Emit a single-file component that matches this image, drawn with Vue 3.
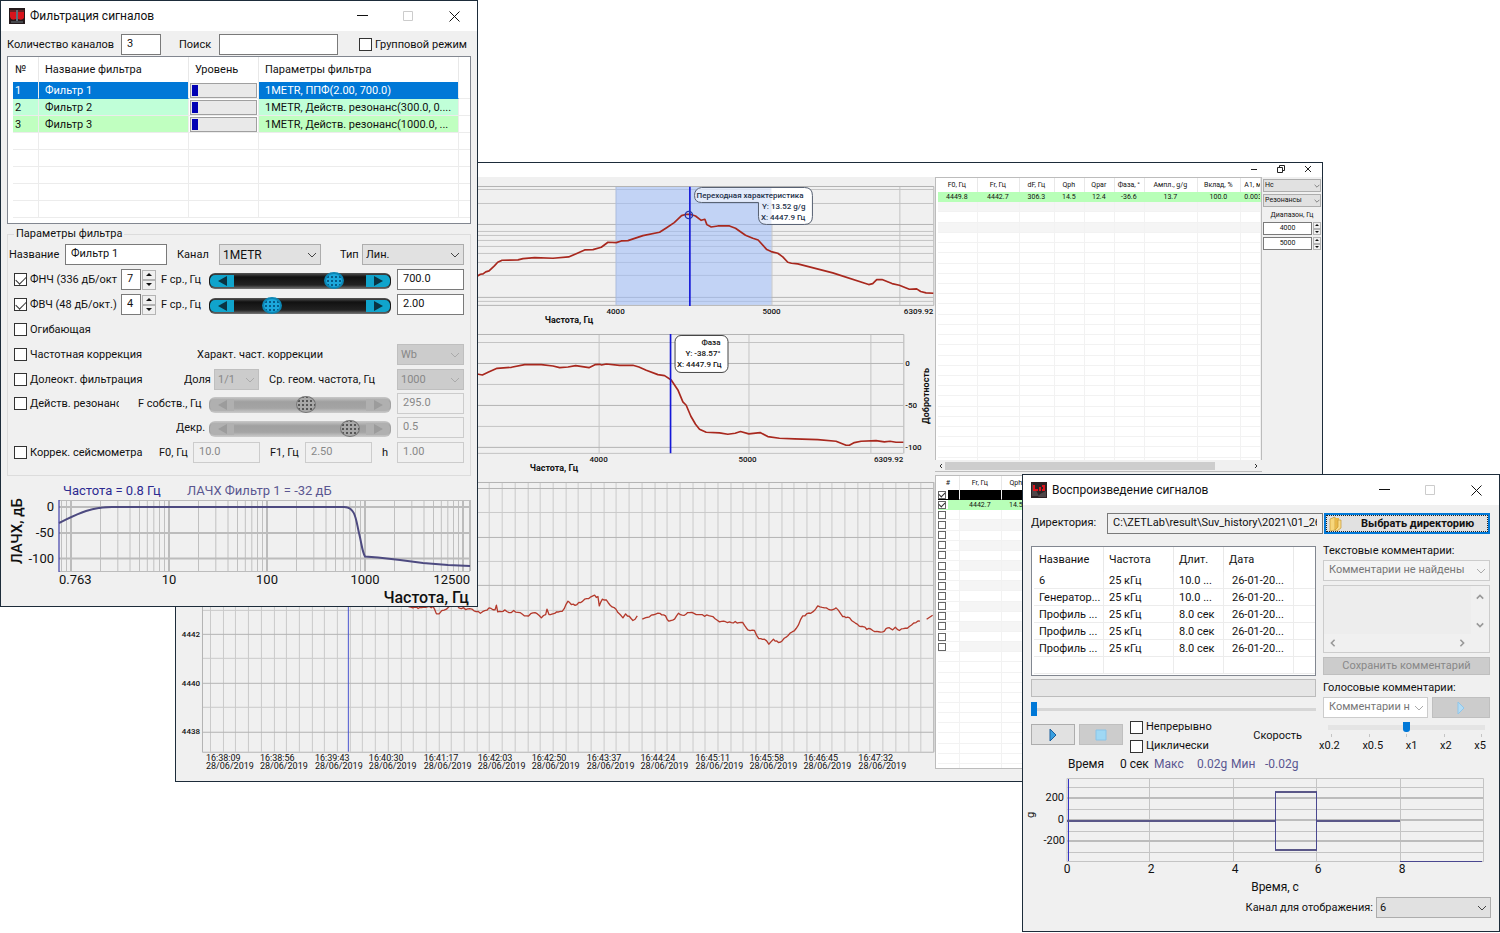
<script setup>
import { ref } from 'vue'

const filters = [
  { n: 1, name: 'Фильтр 1', params: '1METR, ППФ(2.00, 700.0)', cls: 'selected' },
  { n: 2, name: 'Фильтр 2', params: '1METR, Действ. резонанс(300.0, 0....', cls: 'mint' },
  { n: 3, name: 'Фильтр 3', params: '1METR, Действ. резонанс(1000.0, ...', cls: 'lime' }
]
const files = [
  ['6', '25 кГц', '10.0 ...', '26-01-20...'],
  ['Генератор...', '25 кГц', '10.0 ...', '26-01-20...'],
  ['Профиль ...', '25 кГц', '8.0 сек', '26-01-20...'],
  ['Профиль ...', '25 кГц', '8.0 сек', '26-01-20...'],
  ['Профиль ...', '25 кГц', '8.0 сек', '26-01-20...']
]
const resonanceHead = ['F0, Гц', 'Fr, Гц', 'dF, Гц', 'Qph', 'Qpar', 'Фаза, °', 'Ампл., g/g', 'Вклад, %', 'A1, м']
const resonance = ['4449.8', '4442.7', '306.3', '14.5', '12.4', '-36.6', '13.7', '100.0', '0.003']
const times = ['16:38:09', '16:38:56', '16:39:43', '16:40:30', '16:41:17', '16:42:03', '16:42:50', '16:43:37', '16:44:24', '16:45:11', '16:45:58', '16:46:45', '16:47:32']

const fLow = ref(80)
const fHigh = ref(25)
const fOwn = ref(55)
const decr = ref(95)
const position = ref(0)
const speed = ref(2)

// Logarithmic grid of the amplitude response, four decades
const decades = [0, 1, 2, 3, 4].map(d => 71 + d * 98)
const minorLines = []
for (let d = 0; d < 4; d++) {
  for (let k = 2; k < 10; k++) minorLines.push(71 + 98 * (d + Math.log10(k)))
}
minorLines.push(71 + 98 * Math.log10(0.8), 71 + 98 * Math.log10(0.9))

const trendX = Array.from({ length: 58 }, (_, i) => Math.round(210 + i * 12.7))
const trendY = Array.from({ length: 11 }, (_, i) => Math.round(488 + i * 24.35))

// Adds a small repeatable ripple between the key points of a measured curve
function ripple(points, amp) {
  const out = []
  let seed = 7
  for (let i = 0; i < points.length - 1; i++) {
    const [x0, y0] = points[i]
    const [x1, y1] = points[i + 1]
    const steps = Math.max(1, Math.round((x1 - x0) / 6))
    for (let s = 0; s < steps; s++) {
      seed = (seed * 73 + 41) % 997
      const j = s === 0 ? 0 : (seed / 997 - 0.5) * amp
      out.push(`${(x0 + ((x1 - x0) * s) / steps).toFixed(1)},${(y0 + ((y1 - y0) * s) / steps + j).toFixed(1)}`)
    }
  }
  out.push(points[points.length - 1].join(','))
  return out.join(' ')
}
const trendA = ripple([[600, 30], [735, 52], [745, 56], [790, 50], [800, 72], [808, 72], [816, 62], [830, 58], [850, 44], [875, 56], [900, 56], [932, 70], [958, 54], [976, 60], [980, 46], [984, 66], [1005, 60], [1018, 68], [1032, 62], [1070, 78], [1096, 68], [1115, 84], [1128, 74], [1132, 58], [1138, 74], [1178, 64], [1195, 34], [1205, 44], [1222, 44], [1245, 28], [1270, 18], [1285, 20], [1289, 48], [1298, 28], [1310, 30], [1345, 68], [1360, 84], [1368, 72], [1390, 92], [1403, 78]], 7)
const trendB = ripple([[188, 88], [215, 76], [235, 70], [258, 78], [268, 94], [285, 88], [297, 70], [308, 76], [330, 68], [350, 74], [400, 80], [420, 96], [450, 96], [490, 98], [505, 120], [525, 122], [538, 146], [555, 148], [568, 163], [582, 148], [597, 158], [620, 142], [650, 116], [670, 78], [700, 66], [715, 48], [735, 54], [752, 60], [770, 54], [790, 80], [805, 82], [845, 110], [880, 122], [910, 126], [925, 114], [940, 120], [948, 112], [960, 122], [990, 110], [1010, 98], [1022, 94]], 6)
</script>

<template>
  <main class="desktop">
    <section class="window monitor" aria-label="Резонансы">
      <header class="monitor-bar">
        <button aria-label="Свернуть"><svg viewBox="0 0 10 10"><path d="M2 5.500h6" /></svg></button>
        <button aria-label="Восстановить"><svg viewBox="0 0 10 10"><path d="M1.500 3.500h5v5h-5zM3.500 3.500v-2h5v5h-2" /></svg></button>
        <button aria-label="Закрыть"><svg viewBox="0 0 10 10"><path d="M2 2l6 6M8 2l-6 6" /></svg></button>
      </header>
      <div class="monitor-body">
        <div class="charts">
          <svg viewBox="176 177 760 155" class="plot">
            <g stroke="#c4c4c4">
              <path d="M203 189.500H934M203 203.500H934M203 231.500H934M203 235.500H934M203 240.500H934M203 246.500H934M203 253.500H934M203 262.500H934M203 275.500H934M203 301.500H934M900.500 186V305M616.500 186V305M772.500 186V305" />
              <path d="M203 224.500H934M203 297.500H934" stroke="#b4b4b4" />
              <path d="M203 186.500H934.500V305.500H203z" fill="none" stroke="#b4b4b4" />
            </g>
            <rect x="616" y="187" width="156" height="118" fill="#9cbcfa" fill-opacity=".55" />
            <path d="M702 187.500h103q8 0 8 8v21q0 8-8 8h-38q-8 0-8-8v-14h-57q-7 0-7-7t7-8z" fill="#fff" fill-opacity=".55" />
            <path d="M772 188h33q8 0 8 8v20q0 8-8 8H772z" fill="#fff" />
            <path d="M702 187.500h103q8 0 8 8v21q0 8-8 8h-38q-8 0-8-8v-14h-57q-7 0-7-7t7-8z" fill="none" stroke="#555f70" />
            <g transform="translate(470 155) scale(.33333)">
              <path d="M22 364L32 358 40 357 48 351 58 348 74 333 84 322 97 316 145 315 160 311 195 308 250 310 297 306 318 297 345 285 370 284 395 277 415 262 440 263 455 258 475 257 520 242 570 232 590 219 614 203 636 182 650 178 662 178 678 183 695 196 706 193 712 209 725 216 745 213 780 213 798 220 828 241 850 250 866 255 892 284 905 290 925 295 940 306 955 322 966 325 985 327 1090 354 1198 389 1210 386 1222 374 1238 374 1268 386 1290 391 1320 403 1342 402 1354 410 1370 414 1392 415" class="curve" />
              <path d="M661 95V453" class="cursor" />
              <circle cx="658" cy="180" r="11" fill="none" stroke="#2438a8" stroke-width="4" />
            </g>
            <g class="tiny" fill="#22304a">
              <text x="697" y="198">Переходная характеристика</text>
              <text x="806" y="209" text-anchor="end">Y: 13.52 g/g</text>
              <text x="806" y="220" text-anchor="end">X: 4447.9 Гц</text>
            </g>
            <g class="tiny">
              <text x="616" y="314" text-anchor="middle">4000</text>
              <text x="772" y="314" text-anchor="middle">5000</text>
              <text x="934" y="314" text-anchor="end">6309.92</text>
              <text x="545" y="323" class="axis">Частота, Гц</text>
            </g>
          </svg>
          <svg viewBox="176 332 760 148" class="plot">
            <path d="M203 342.500H904M203 384.500H904M203 426.500H904M203 453.500H904M599.500 334V453M749.500 334V453M871.500 334V453" stroke="#c4c4c4" />
            <path d="M203 334.500H904.500V453.500M203 363.500H904M203 405.500H904M203 447.500H904" fill="none" stroke="#b4b4b4" />
            <g transform="translate(470 325) scale(.33333)">
              <path d="M22 147L38 150 55 142 82 130 125 127 165 119 215 119 250 123 270 128 295 126 318 122 358 128 376 119 390 118 396 120 410 117 450 121 490 121 508 126 530 136 565 149 585 152 605 165 625 195 640 231 650 241 664 274 678 298 690 313 710 322 750 324 775 328 797 325 813 320 838 327 872 323 895 335 930 340 975 342 1045 344 1100 349 1130 361 1140 361 1155 353 1175 349 1220 347 1245 351 1262 349 1280 352 1302 352" class="curve" />
              <path d="M603 27V385" class="cursor" />
            </g>
            <rect x="675.500" y="335.500" width="53" height="37" rx="6" fill="#fff" stroke="#444" />
            <g class="tiny">
              <text x="721" y="345" text-anchor="end">Фаза</text>
              <text x="721" y="356" text-anchor="end">Y: -38.57°</text>
              <text x="722" y="367" text-anchor="end">X: 4447.9 Гц</text>
              <text x="906" y="366">0</text>
              <text x="906" y="408">-50</text>
              <text x="906" y="450">-100</text>
              <text x="599" y="462" text-anchor="middle">4000</text>
              <text x="748" y="462" text-anchor="middle">5000</text>
              <text x="904" y="462" text-anchor="end">6309.92</text>
              <text x="530" y="471" class="axis">Частота, Гц</text>
              <text transform="translate(930 424) rotate(-90)" class="axis">Добротность</text>
            </g>
          </svg>
          <svg viewBox="176 480 760 302" class="plot">
            <path v-for="x in trendX" :key="'x' + x" :d="`M${x}.5 482V752`" stroke="#cacaca" />
            <path v-for="(y, i) in trendY" :key="'y' + y" :d="`M202 ${y}.5H934`" :stroke="i % 2 ? '#cacaca' : '#b4b4b4'" />
            <path d="M202.500 482.500H934.500V752.500H202.500z" fill="none" stroke="#b4b4b4" />
            <path d="M348.500 482V752" stroke="#4a54d0" />
            <g transform="translate(170 590) scale(.33333)"><polyline :points="trendA" class="curve thin" /></g>
            <g transform="translate(580 590) scale(.33333)">
              <polyline :points="trendB" class="curve thin" />
              <path d="M1042 88L1060 76" class="curve thin" />
            </g>
            <g class="tiny">
              <text x="200" y="637" text-anchor="end">4442</text>
              <text x="200" y="686" text-anchor="end">4440</text>
              <text x="200" y="734" text-anchor="end">4438</text>
            </g>
            <g class="stamps">
              <template v-for="(t, i) in times" :key="t">
                <text :x="206 + Math.round(i * 54.4)" y="761">{{ t }}</text>
                <text :x="206 + Math.round(i * 54.4)" y="769">28/06/2019</text>
              </template>
            </g>
          </svg>
        </div>

        <div class="tables">
          <div class="pane top-pane">
            <table class="mini">
              <colgroup><col class="m40" /><col class="m41" /><col class="m35" /><col class="m30" /><col class="m30" /><col class="m30" /><col class="m53" /><col class="m43" /><col /></colgroup>
              <thead><tr><th v-for="h in resonanceHead" :key="h">{{ h }}</th></tr></thead>
              <tbody>
                <tr class="green"><td v-for="(v, i) in resonance" :key="i">{{ v }}</td></tr>
                <tr v-for="r in 26" :key="r" :class="{ shade: r === 1 || r === 3 }"><td v-for="c in 9" :key="c"></td></tr>
              </tbody>
            </table>
          </div>
          <div class="hscroll"><svg viewBox="0 0 6 6"><path d="M4 1L2 3l2 2" /></svg><span class="thumb"></span><svg viewBox="0 0 6 6"><path d="M2 1l2 2-2 2" /></svg></div>
          <div class="pane low-pane">
            <table class="mini">
              <colgroup><col class="m22" /><col class="m41" /><col class="m30" /><col class="m41" /><col /></colgroup>
              <thead><tr><th>#</th><th>Fr, Гц</th><th>Qph</th><th></th><th></th></tr></thead>
              <tbody>
                <tr v-for="r in 28" :key="r" :class="{ black: r === 1, green: r === 2, shade: r % 2 === 0 && r < 17 && r > 2 }">
                  <td class="tick"><input v-if="r < 17" type="checkbox" :checked="r < 3" :aria-label="'Строка ' + r" /></td>
                  <td>{{ r === 2 ? '4442.7' : '' }}</td>
                  <td>{{ r === 2 ? '14.5' : '' }}</td>
                  <td></td><td></td>
                </tr>
              </tbody>
            </table>
          </div>
        </div>

        <aside class="range-panel">
          <span class="pick"><select aria-label="Величина"><option>Hc</option></select><svg class="chev" viewBox="0 0 10 6"><path d="M1 1l4 4 4-4" /></svg></span>
          <span class="pick"><select aria-label="Режим"><option>Резонансы</option></select><svg class="chev" viewBox="0 0 10 6"><path d="M1 1l4 4 4-4" /></svg></span>
          <label class="range-title" for="range-from">Диапазон, Гц</label>
          <div class="range-row"><input id="range-from" value="4000" /><span class="spin"><button aria-label="Больше"><i class="up"></i></button><button aria-label="Меньше"><i class="down"></i></button></span></div>
          <div class="range-row"><input aria-label="Верхняя граница" value="5000" /><span class="spin"><button aria-label="Больше"><i class="up"></i></button><button aria-label="Меньше"><i class="down"></i></button></span></div>
        </aside>
      </div>
    </section>

    <section class="window filter" aria-label="Фильтрация сигналов">
      <header class="bar">
        <svg class="logo" viewBox="0 0 16 16"><rect width="16" height="16" fill="#241a1c" /><path d="M1 2h6v9q-5 2-6-2zM9 2h6v8q-2 3-6 1z" fill="#d8141c" /><path d="M1 2h14v2H1z" fill="#6b2024" /><path d="M7 2h2v12H7z" fill="#5d6d78" /><path d="M2 13h12v2H2z" fill="#46484c" /></svg>
        <h1>Фильтрация сигналов</h1>
        <button aria-label="Свернуть"><svg viewBox="0 0 11 11"><path d="M0 4.500h11" /></svg></button>
        <button aria-label="Развернуть" disabled><svg viewBox="0 0 11 11"><path d="M.5.5h9v9h-9z" /></svg></button>
        <button aria-label="Закрыть"><svg viewBox="0 0 11 11"><path d="M.5.5l10 10M10.500.5l-10 10" /></svg></button>
      </header>
      <div class="filter-body">
        <div class="row search-row">
          <label for="count">Количество каналов</label><input id="count" value="3" />
          <label for="search" class="pad-search">Поиск</label><input id="search" />
          <label class="check"><input type="checkbox" />Групповой режим</label>
        </div>
        <div class="list-box">
          <table class="list filter-list">
            <colgroup><col class="c26" /><col class="c150" /><col class="c70" /><col class="c200" /><col /></colgroup>
            <thead><tr><th>№</th><th>Название фильтра</th><th>Уровень</th><th>Параметры фильтра</th><th></th></tr></thead>
            <tbody>
              <tr v-for="f in filters" :key="f.n" :class="f.cls">
                <td>{{ f.n }}</td><td>{{ f.name }}</td><td class="level"><div><i></i></div></td><td>{{ f.params }}</td><td></td>
              </tr>
              <tr v-for="r in 5" :key="'e' + r"><td v-for="c in 5" :key="c"></td></tr>
            </tbody>
          </table>
        </div>
        <fieldset>
          <legend>Параметры фильтра</legend>
          <div class="row r-name">
            <label for="fname">Название</label><input id="fname" value="Фильтр 1" />
            <label for="chan" class="pad-m">Канал</label>
            <span class="pick big"><select id="chan"><option>1METR</option></select><svg class="chev" viewBox="0 0 10 6"><path d="M1 1l4 4 4-4" /></svg></span>
            <label for="type" class="pad-l">Тип</label>
            <span class="pick"><select id="type"><option>Лин.</option></select><svg class="chev" viewBox="0 0 10 6"><path d="M1 1l4 4 4-4" /></svg></span>
          </div>
          <div class="row r-slide">
            <label class="check"><input type="checkbox" checked />ФНЧ (336 дБ/окт</label>
            <input class="order" value="7" aria-label="Порядок ФНЧ" />
            <span class="spin"><button aria-label="Больше"><i class="up"></i></button><button aria-label="Меньше"><i class="down"></i></button></span>
            <label for="s1" class="pad-s">F ср., Гц</label>
            <span class="slider"><button aria-label="Влево"><i class="left"></i></button><input id="s1" v-model="fLow" type="range" /><button aria-label="Вправо"><i class="right"></i></button></span>
            <input value="700.0" aria-label="Частота ФНЧ" />
          </div>
          <div class="row r-slide">
            <label class="check"><input type="checkbox" checked />ФВЧ (48 дБ/окт.)</label>
            <input class="order" value="4" aria-label="Порядок ФВЧ" />
            <span class="spin"><button aria-label="Больше"><i class="up"></i></button><button aria-label="Меньше"><i class="down"></i></button></span>
            <label for="s2" class="pad-s">F ср., Гц</label>
            <span class="slider"><button aria-label="Влево"><i class="left"></i></button><input id="s2" v-model="fHigh" type="range" /><button aria-label="Вправо"><i class="right"></i></button></span>
            <input value="2.00" aria-label="Частота ФВЧ" />
          </div>
          <div class="row"><label class="check"><input type="checkbox" />Огибающая</label></div>
          <div class="row r-corr">
            <label class="check"><input type="checkbox" />Частотная коррекция</label>
            <label for="corr">Характ. част. коррекции</label>
            <span class="pick off"><select id="corr" disabled><option>Wb</option></select><svg class="chev" viewBox="0 0 10 6"><path d="M1 1l4 4 4-4" /></svg></span>
          </div>
          <div class="row r-oct">
            <label class="check"><input type="checkbox" />Долеокт. фильтрация</label>
            <label for="share">Доля</label>
            <span class="pick off"><select id="share" disabled><option>1/1</option></select><svg class="chev" viewBox="0 0 10 6"><path d="M1 1l4 4 4-4" /></svg></span>
            <label for="mid" class="pad-m">Ср. геом. частота, Гц</label>
            <span class="pick off"><select id="mid" disabled><option>1000</option></select><svg class="chev" viewBox="0 0 10 6"><path d="M1 1l4 4 4-4" /></svg></span>
          </div>
          <div class="row r-res">
            <label class="check"><input type="checkbox" />Действ. резонанс</label>
            <label for="s3" class="pad-l">F собств., Гц</label>
            <span class="slider off"><button disabled aria-label="Влево"><i class="left"></i></button><input id="s3" v-model="fOwn" type="range" disabled /><button disabled aria-label="Вправо"><i class="right"></i></button></span>
            <input value="295.0" disabled aria-label="Собственная частота" />
          </div>
          <div class="row r-decr">
            <label for="s4">Декр.</label>
            <span class="slider off"><button disabled aria-label="Влево"><i class="left"></i></button><input id="s4" v-model="decr" type="range" disabled /><button disabled aria-label="Вправо"><i class="right"></i></button></span>
            <input value="0.5" disabled aria-label="Декремент" />
          </div>
          <div class="row r-seis">
            <label class="check"><input type="checkbox" />Коррек. сейсмометра</label>
            <label for="f0">F0, Гц</label><input id="f0" value="10.0" disabled />
            <label for="f1" class="pad-m">F1, Гц</label><input id="f1" value="2.50" disabled />
            <label for="hh" class="pad-m">h</label><input id="hh" value="1.00" disabled />
          </div>
        </fieldset>
      </div>
      <svg viewBox="1 480 476 126" class="plot">
        <path v-for="x in minorLines" :key="x" :d="`M${x.toFixed(1)} 500V571`" stroke="#c0c0c0" />
        <path v-for="x in decades" :key="x" :d="`M${x} 500V571`" stroke="#bcbcbc" stroke-width="2" />
        <path d="M59 500.500H470M59 571.500H470" stroke="#bcbcbc" />
        <path d="M59 507H470M59 533H470M59 558.500H470M470 500V571" stroke="#bcbcbc" stroke-width="2" />
        <path d="M59 500V572" stroke="#1c1c9c" />
        <path d="M59 523C74 516 88 507 112 507H344C356 507 356 521 359 533S362 551 365 556.500L378 557.500 400 560 423 563 448 565 470 566" fill="none" stroke="#4d4a80" stroke-width="2" />
        <g fill="#2c2a90" class="f13"><text x="63" y="495">Частота = 0.8 Гц</text><text x="187" y="495" fill="#5a5790">ЛАЧХ Фильтр 1 = -32 дБ</text></g>
        <g class="f13">
          <text x="54" y="511" text-anchor="end">0</text><text x="54" y="537" text-anchor="end">-50</text><text x="54" y="563" text-anchor="end">-100</text>
          <text x="59" y="584">0.763</text><text x="169" y="584" text-anchor="middle">10</text><text x="267" y="584" text-anchor="middle">100</text><text x="365" y="584" text-anchor="middle">1000</text><text x="470" y="584" text-anchor="end">12500</text>
          <text x="469" y="603" text-anchor="end" class="f16 med">Частота, Гц</text>
          <text transform="translate(22 564) rotate(-90)" class="f15 med">ЛАЧХ, дБ</text>
        </g>
      </svg>
    </section>

    <section class="window player" aria-label="Воспроизведение сигналов">
      <header class="bar">
        <svg class="logo" viewBox="0 0 16 16"><rect width="16" height="16" fill="#2c2224" /><path d="M1 1l7 13H1zM9 12l6-3v6H7z" fill="#6c6264" opacity=".55" /><path d="M2 3h2v4h3v2H2zM8 5h2v4H8zM11 3h3v6h-3V7h1V5h-1z" fill="#e0141c" /></svg>
        <h1>Воспроизведение сигналов</h1>
        <button aria-label="Свернуть"><svg viewBox="0 0 11 11"><path d="M0 4.500h11" /></svg></button>
        <button aria-label="Развернуть" disabled><svg viewBox="0 0 11 11"><path d="M.5.5h9v9h-9z" /></svg></button>
        <button aria-label="Закрыть"><svg viewBox="0 0 11 11"><path d="M.5.5l10 10M10.500.5l-10 10" /></svg></button>
      </header>
      <div class="dir-row">
        <label for="dir">Директория:</label>
        <input id="dir" value="C:\ZETLab\result\Suv_history\2021\01_26" readonly />
        <button class="choose">
          <svg viewBox="0 0 16 16"><path d="M2 3l5-2v13l-5 1z" fill="#f7d77c" stroke="#c79a35" stroke-width=".7" /><path d="M7 2h4v12H7z" fill="#e8b84a" /><path d="M10 4h3v8l-4 3-2-1 3-3z" fill="#f8dc8c" stroke="#c79a35" stroke-width=".7" /></svg>
          <span>Выбрать директорию</span>
        </button>
      </div>
      <div class="player-grid">
        <div class="left-col">
          <div class="list-box files">
            <table class="list file-list">
              <colgroup><col class="c70" /><col class="c70" /><col class="c50" /><col class="c70" /><col /></colgroup>
              <thead><tr><th>Название</th><th>Частота</th><th>Длит.</th><th>Дата</th><th></th></tr></thead>
              <tbody>
                <tr v-for="(f, i) in files" :key="i"><td v-for="(c, k) in f" :key="k">{{ c }}</td><td></td></tr>
                <tr><td v-for="c in 5" :key="c"></td></tr>
              </tbody>
            </table>
          </div>
          <div class="progress" role="progressbar" aria-label="Ход воспроизведения"></div>
          <input v-model="position" class="seek" type="range" aria-label="Позиция" />
          <div class="play-row">
            <button class="media" aria-label="Воспроизвести"><svg viewBox="0 0 16 16"><path d="M5 2l6 6-6 6z" fill="#3aa0e0" stroke="#1a5f9c" /></svg></button>
            <button class="media off" disabled aria-label="Стоп"><svg viewBox="0 0 16 16"><path d="M3 3h10v10H3z" fill="#9fd8f4" stroke="#8ac4e8" /></svg></button>
            <div class="modes">
              <label class="check"><input type="checkbox" />Непрерывно</label>
              <label class="check"><input type="checkbox" />Циклически</label>
            </div>
            <label for="speed" class="speed-label">Скорость</label>
          </div>
        </div>
        <div class="right-col">
          <label for="txt">Текстовые комментарии:</label>
          <span class="pick ghost"><select id="txt" disabled><option>Комментарии не найдены</option></select><svg class="chev" viewBox="0 0 10 6"><path d="M1 1l4 4 4-4" /></svg></span>
          <div class="memo">
            <textarea disabled aria-label="Комментарий"></textarea>
            <span class="vbar"><svg viewBox="0 0 10 6"><path d="M1 5l4-4 4 4" /></svg><svg viewBox="0 0 10 6"><path d="M1 1l4 4 4-4" /></svg></span>
            <span class="hbar"><svg viewBox="0 0 6 10"><path d="M5 1L1 5l4 4" /></svg><svg viewBox="0 0 6 10"><path d="M1 1l4 4-4 4" /></svg></span>
          </div>
          <button class="save" disabled>Сохранить комментарий</button>
          <label for="voice">Голосовые комментарии:</label>
          <div class="voice-row">
            <span class="pick ghost"><select id="voice" disabled><option>Комментарии н</option></select><svg class="chev" viewBox="0 0 10 6"><path d="M1 1l4 4 4-4" /></svg></span>
            <button class="media off" disabled aria-label="Прослушать"><svg viewBox="0 0 16 16"><path d="M5 2l6 6-6 6z" fill="#b4dcf4" stroke="#8fc6ea" /></svg></button>
          </div>
          <input id="speed" v-model="speed" class="speed" type="range" min="0" max="4" />
          <div class="ticks"><i v-for="n in 5" :key="n"></i></div>
          <div class="marks"><span>x0.2</span><span>x0.5</span><span>x1</span><span>x2</span><span>x5</span></div>
        </div>
      </div>
      <svg viewBox="1023 755 476 141" class="plot">
        <path d="M1067 779.500H1483.500V862.500H1067zM1067 788.500h416M1067 810.500h416M1067 832.500h416M1067 853.500h416M1149.500 779v83M1233.500 779v83M1316.500 779v83M1400.500 779v83" fill="none" stroke="#c4c4c4" />
        <path d="M1067 799h416M1067 821h416M1067 842h416" stroke="#bcbcbc" stroke-width="2" />
        <path d="M1068.500 780v82" stroke="#3434c4" />
        <path d="M1067 822H1275M1275 793H1317M1275 851H1317M1316 822H1400" stroke="#5a5788" stroke-width="2" />
        <path d="M1275.500 793V851M1316.500 793V851M1400 862.500H1482" stroke="#4a4890" />
        <g class="f12">
          <text x="1068" y="769">Время</text><text x="1120" y="769">0 сек</text>
          <g fill="#5a5790"><text x="1154" y="769">Макс</text><text x="1197" y="769">0.02g</text><text x="1231" y="769">Мин</text><text x="1265" y="769">-0.02g</text></g>
          <text x="1275" y="892" text-anchor="middle">Время, с</text>
        </g>
        <g class="f11">
          <text x="1064" y="802" text-anchor="end">200</text><text x="1064" y="824" text-anchor="end">0</text><text x="1065" y="845" text-anchor="end">-200</text>
          <text transform="translate(1034 819) rotate(-90)">g</text>
        </g>
        <g class="f12" text-anchor="middle"><text x="1067" y="874">0</text><text x="1151" y="874">2</text><text x="1235" y="874">4</text><text x="1318" y="874">6</text><text x="1402" y="874">8</text></g>
      </svg>
      <div class="show-row">
        <label for="show">Канал для отображения:</label>
        <span class="pick"><select id="show"><option>6</option></select><svg class="chev" viewBox="0 0 10 6"><path d="M1 1l4 4 4-4" /></svg></span>
      </div>
    </section>
  </main>
</template>

<style>
body { background: #fff; }
</style>

<style scoped>
* { box-sizing: border-box; }
.desktop {
  display: grid;
  grid-template-columns: minmax(0, 175fr) minmax(0, 303fr) minmax(0, 544fr) minmax(0, 301fr) minmax(0, 177fr);
  align-items: start;
  min-height: 100vh;
  overflow: hidden;
  font-family: Roboto, "Liberation Sans", sans-serif;
  font-size: 11px;
  line-height: 14px;
  color: #111;
}
.window { grid-row: 1; min-width: 0; background: #f0f0f0; border: 1px solid #1d2c3a; display: flex; flex-direction: column; }
.monitor { grid-column: 2 / 5; margin-top: 162px; }
.filter { grid-column: 1 / 3; z-index: 1; }
.player { grid-column: 4 / 6; margin-top: 474px; z-index: 2; }

input, select, button, textarea { font: inherit; color: inherit; margin: 0; min-width: 0; }
button { padding: 0; border: 0; background: none; }
input { width: 100%; height: 21px; border: 1px solid #7a7a7a; background: #fff; padding: 0 5px 2px; border-radius: 0; }
input:disabled { background: #f0f0f0; border-color: #ccc; color: #888; }
input[type="checkbox"] { appearance: none; flex: none; width: 13px; height: 13px; padding: 0; border: 1px solid #333; background: #fff; display: grid; place-items: center; }
input[type="checkbox"]:checked::before { content: ""; width: 9px; height: 5px; margin-top: -2px; border: solid #333; border-width: 0 0 1px 1px; transform: rotate(-45deg); }
label { white-space: nowrap; overflow: hidden; }
.plot { display: block; width: 100%; height: auto; }

.bar { display: flex; align-items: center; height: 30px; background: #fff; padding-left: 8px; }
.bar h1 { flex: 1; margin: 0 0 0 5px; font-size: 12px; font-weight: 400; line-height: 16px; }
.bar button { width: 46px; height: 30px; display: grid; place-items: center; }
.bar button svg { width: 11px; height: 11px; fill: none; stroke: #111; }
.bar button:disabled svg { stroke: #ccc; }
.logo { width: 16px; height: 16px; }

.pick { display: grid; align-items: center; min-width: 0; }
.pick select { grid-area: 1 / 1; width: 100%; height: 21px; appearance: none; border: 1px solid #adadad; border-radius: 0; background: #e1e1e1; padding: 0 3px; opacity: 1; }
.pick .chev { grid-area: 1 / 1; justify-self: end; width: 10px; height: 6px; margin-right: 4px; fill: none; stroke: #444; pointer-events: none; }
.pick.big select { font-size: 12px; }
.pick.off select { background: #ccc; border-color: #bfbfbf; color: #888; }
.pick.off .chev, .pick.ghost .chev { stroke: #aaa; }
.pick.ghost select { background: #f4f4f4; border-color: #ccc; color: #777; padding: 0 5px 2px; }

.spin { display: grid; grid-template-rows: 1fr 1fr; height: 20px; margin-left: 1px; }
.spin button { border: 1px solid #b4b4b4; display: grid; place-items: center; }
.spin i { border: solid transparent; border-width: 0 3px; }
.spin .up { border-bottom: 3px solid #111; }
.spin .down { border-top: 3px solid #111; }

.row { display: grid; align-items: center; height: 21px; }
.check { display: flex; align-items: center; gap: 3px; padding-left: 5px; }
.filter-body { padding: 3px 6px 4px; display: flex; flex-direction: column; }
.search-row { grid-template-columns: 114px 40px 58px 119px 1fr; margin-bottom: 1px; }
.search-row .check { padding-left: 21px; }
.pad-search { padding-left: 18px; }
.list-box { border: 1px solid #828790; background: #fff; overflow: hidden; padding-left: 5px; }
.list { width: 100%; table-layout: fixed; border-spacing: 0; }
.list th { height: 25px; font-weight: 400; text-align: left; padding: 0 0 0 6px; border-right: 1px solid #e8e8e8; white-space: nowrap; }
.list td { height: 17px; line-height: 14px; padding: 2px 0 0 6px; border-right: 1px solid #ececec; border-bottom: 1px solid #ececec; white-space: nowrap; overflow: hidden; }
.list th:last-child, .list td:last-child { border-right: 0; }
.filter-list th:first-child, .filter-list td:first-child { padding-left: 2px; }
.c26 { width: 26px; } .c50 { width: 50px; } .c70 { width: 70px; } .c150 { width: 150px; } .c200 { width: 200px; }
.filter .list-box { height: 168px; }
.selected td:not(:last-child) { background: #0078d7; color: #fff; border-bottom-color: #0078d7; }
.mint td:not(:last-child) { background: #c0ffd8; }
.lime td:not(:last-child) { background: #c0ffc0; }
.list tr td.level { background: #fff; padding: 0 1px; border-bottom-color: #ececec; }
.level div { height: 15px; border: 1px solid #a0a0a0; background: #e9e9e9; padding: 1px; }
.level i { display: block; width: 6px; height: 11px; background: #0000b4; }

fieldset { margin: 3px 0 0; padding: 3px 6px 12px 1px; border: 1px solid #dcdcdc; display: grid; row-gap: 4px; min-width: 0; }
legend { margin-left: 5px; padding: 0 2px; height: 14px; }
.r-name { grid-template-columns: 56px 102px 52px 102px 41px 1fr; }
.r-slide { grid-template-columns: 112px 20px 15px 53px 1fr 73px; }
.r-corr { grid-template-columns: 188px 1fr 67px; }
.r-oct { grid-template-columns: 175px 30px 45px 1fr 67px; height: 20px; }
.r-res { grid-template-columns: 110px 90px 1fr 73px; height: 20px; }
.r-decr { grid-template-columns: 33px 182px 73px; justify-content: end; }
.r-seis { grid-template-columns: 150px 34px 67px 45px 1fr 25px 67px; }
.r-slide > input:last-child, .r-res > input, .r-decr > input { width: 67px; justify-self: end; }
.pad-m { padding-left: 10px; } .pad-l { padding-left: 19px; } .pad-s { padding-left: 5px; }

.slider { display: flex; align-items: center; height: 16px; border-radius: 6px; background: linear-gradient(#555, #111 25%, #222 75%, #777); padding: 0 1px; margin-top: 2px; }
.slider button { width: 24px; height: 12px; border-radius: 5px 0 0 5px; background: #10a4cc; display: grid; place-items: center; }
.slider button:last-child { border-radius: 0 5px 5px 0; }
.slider i { border: solid transparent; border-width: 5px 0; }
.slider .left { border-right: 9px solid #0b3442; }
.slider .right { border-left: 9px solid #0b3442; }
.slider input { appearance: none; flex: 1; height: 17px; border: 0; padding: 0; background: none; }
.slider input::-webkit-slider-thumb { appearance: none; width: 20px; height: 17px; border-radius: 50%; border: 2px solid #0b86b4; background: radial-gradient(circle, #075c88 25%, transparent 40%) 0 1px / 4px 4px, #1ca8dc; }
.slider.off { background: linear-gradient(#c8c8c8, #a0a0a0 30%, #a4a4a4 70%, #ccc); }
.slider.off button { background: #b0b0b0; }
.slider.off .left { border-right-color: #9c9c9c; }
.slider.off .right { border-left-color: #9c9c9c; }
.slider.off input::-webkit-slider-thumb { border: 1px solid #777; background: radial-gradient(circle, #555 25%, transparent 40%) 0 2px / 4px 4px, #a8a8a8; }

.plot text { fill: #111; }
.plot g[fill] > text:not([fill]) { fill: inherit; }
.plot text[fill] { fill: #5a5790; }
.tiny text { font-size: 8px; font-weight: 500; }
.stamps text { font-size: 9px; }
.plot .axis { font-size: 9px; font-weight: 700; }
.f11 { font-size: 11px; } .f12 { font-size: 12px; } .f13 { font-size: 13px; }
.f15 { font-size: 15px; } .f16 { font-size: 16px; } .med { font-weight: 500; }
.curve { fill: none; stroke: #a8281e; stroke-width: 5; stroke-linejoin: round; }
.curve.thin { stroke: #b43a2c; stroke-width: 4; }
.cursor { stroke: #1418d8; stroke-width: 5; }

.monitor-bar { height: 14px; background: #fff; display: flex; justify-content: end; align-items: start; padding-right: 1px; }
.monitor-bar button { width: 27px; height: 12px; display: grid; place-items: center; }
.monitor-bar svg { width: 10px; height: 10px; fill: none; stroke: #222; }
.monitor-body { display: grid; grid-template-columns: minmax(0, 760fr) minmax(0, 327fr) minmax(0, 60fr); }
.tables { display: flex; flex-direction: column; }
.pane { background: #fff; border: 1px solid #bcbcbc; overflow: hidden; padding-left: 2px; }
.top-pane { height: 283px; border-bottom: 0; }
.low-pane { height: 294px; }
.mini { width: 100%; table-layout: fixed; border-spacing: 0; font-size: 7px; line-height: 8px; }
.top-pane .mini { height: 290px; }
.low-pane .mini { height: 298px; }
.mini th { height: 14px; padding: 0 2px 0 0; font-weight: 400; border-right: 1px solid #e8e8e8; white-space: nowrap; overflow: hidden; }
.mini td { height: 10px; padding: 0 2px 0 0; text-align: center; border-right: 1px solid #f2f2f2; border-bottom: 1px solid #f2f2f2; overflow: hidden; }
.top-pane th:last-child, .top-pane td:last-child { text-align: left; padding-left: 3px; }
.m22 { width: 22px; } .m30 { width: 30px; } .m35 { width: 35px; } .m40 { width: 40px; } .m41 { width: 42px; } .m43 { width: 43px; } .m53 { width: 53px; }
.mini .green td { background: #b8ffb8; border-color: #b8ffb8; }
.mini .shade td { background: #f5f5f5; }
.mini .black td { background: #000; border-bottom-color: #000; }
.mini tr td.tick { line-height: 0; background: #fff; }
.mini .black td.tick { background: linear-gradient(90deg, #fff 10px, #000 10px); border-bottom-color: #000; }
.mini .green td.tick { background: linear-gradient(90deg, #fff 10px, #b8ffb8 10px); }
.tick input[type="checkbox"] { width: 8px; height: 8px; border-color: #666; }
.tick input[type="checkbox"]:checked::before { width: 5px; height: 3px; }
.hscroll { height: 12px; display: flex; align-items: center; gap: 1px; padding: 0 3px; background: #f0f0f0; margin-bottom: 3px; border-bottom: 1px solid #bcbcbc; }
.hscroll svg { width: 6px; height: 6px; fill: none; stroke: #333; }
.hscroll .thumb { flex: 0 0 84%; height: 8px; background: #cdcdcd; margin-right: auto; }
.range-panel { padding: 2px 1px; font-size: 7px; line-height: 9px; display: flex; flex-direction: column; gap: 2px; }
.range-panel .pick select { height: 13px; padding: 0 1px; }
.range-panel .chev { width: 6px; margin-right: 1px; }
.range-title { text-align: center; padding: 2px 0 0; }
.range-row { display: grid; grid-template-columns: 1fr 9px; }
.range-row input { height: 13px; text-align: center; padding: 0 0 2px; }
.range-row .spin { height: 13px; }
.range-row .spin i { border-left-width: 2px; border-right-width: 2px; }
.range-row .up { border-bottom-width: 2px; } .range-row .down { border-top-width: 2px; }

.dir-row { display: grid; grid-template-columns: 76px 1fr 167px; align-items: center; padding: 8px 9px 0 8px; }
.dir-row label { padding-bottom: 2px; }
.dir-row input { background: #f0f0f0; }
.choose { height: 21px; border: 2px solid #0078d7; outline: 1px dotted #222; outline-offset: -3px; background: #e1e1e1; font-weight: 700; display: grid; grid-template-columns: 18px 1fr; align-items: center; padding: 0 2px; margin-left: 1px; }
.choose svg { width: 16px; height: 16px; }
.choose span { text-align: left; padding-left: 15px; white-space: nowrap; }
.player-grid { display: grid; grid-template-columns: minmax(0, 285fr) minmax(0, 167fr); column-gap: 7px; padding: 12px 9px 0 8px; }
.left-col, .right-col { display: flex; flex-direction: column; min-width: 0; }
.files { height: 130px; padding-left: 2px; }
.file-list th, .file-list td { padding-left: 5px; }
.file-list td:nth-child(4) { padding-left: 8px; }
.progress { height: 18px; margin-top: 3px; background: #e6e6e6; border: 1px solid #bcbcbc; }
.seek, .speed { appearance: none; border: 0; padding: 0; background: linear-gradient(#d6d6d6, #d6d6d6) 0 50% / 100% 3px no-repeat; }
.seek { height: 14px; margin-top: 5px; }
.seek::-webkit-slider-thumb { appearance: none; width: 6px; height: 14px; background: #0078d7; }
.play-row { display: flex; margin-top: 8px; align-items: start; }
.media { width: 44px; height: 21px; border: 1px solid #adadad; background: #e1e1e1; display: grid; place-items: center; margin-right: 4px; }
.media.off { background: #ccc; border-color: #bfbfbf; }
.media svg { width: 16px; height: 16px; }
.modes { display: grid; row-gap: 5px; margin: -4px 0 0 -2px; }
.speed-label { margin: 5px 14px 0 auto; }
.right-col > label { height: 14px; line-height: 10px; }
.memo { margin-top: 4px; height: 68px; border: 1px solid #ccc; display: grid; grid-template: 1fr 18px / 1fr 18px; }
.memo textarea { resize: none; border: 0; padding: 0; background: #ededed; width: 100%; height: 100%; }
.memo svg { fill: none; stroke: #999; stroke-width: 2; }
.vbar, .hbar { display: flex; justify-content: space-between; align-items: center; }
.vbar { flex-direction: column; padding: 8px 0 6px; }
.hbar { padding: 0 6px; }
.vbar svg { width: 8px; height: 6px; } .hbar svg { width: 6px; height: 8px; }
.save { height: 18px; margin: 4px 0 8px; background: #ccc; border: 1px solid #bfbfbf; color: #888; }
.voice-row { display: grid; grid-template-columns: 1fr 58px; column-gap: 4px; }
.voice-row .media { width: auto; margin: 0; }
.voice-row .pick.ghost select { background: #fff; }
.speed { width: auto; height: 10px; margin: 4px 5px 0; background: linear-gradient(#e4e4e4, #e4e4e4) 0 50% / 100% 5px no-repeat; }
.speed::-webkit-slider-thumb { appearance: none; width: 7px; height: 10px; border-radius: 0 0 3px 3px; background: #0078d7; }
.ticks { display: flex; justify-content: space-between; margin: 2px 8px 0; }
.ticks i { width: 1px; height: 3px; background: #c4c4c4; }
.marks { display: flex; justify-content: space-between; margin: 2px 4px 0 -4px; }
.player .plot { margin-top: 1px; }
.show-row { display: grid; grid-template-columns: 1fr 115px; align-items: center; padding: 2px 8px 13px; column-gap: 3px; }
.show-row label { text-align: right; }
</style>
